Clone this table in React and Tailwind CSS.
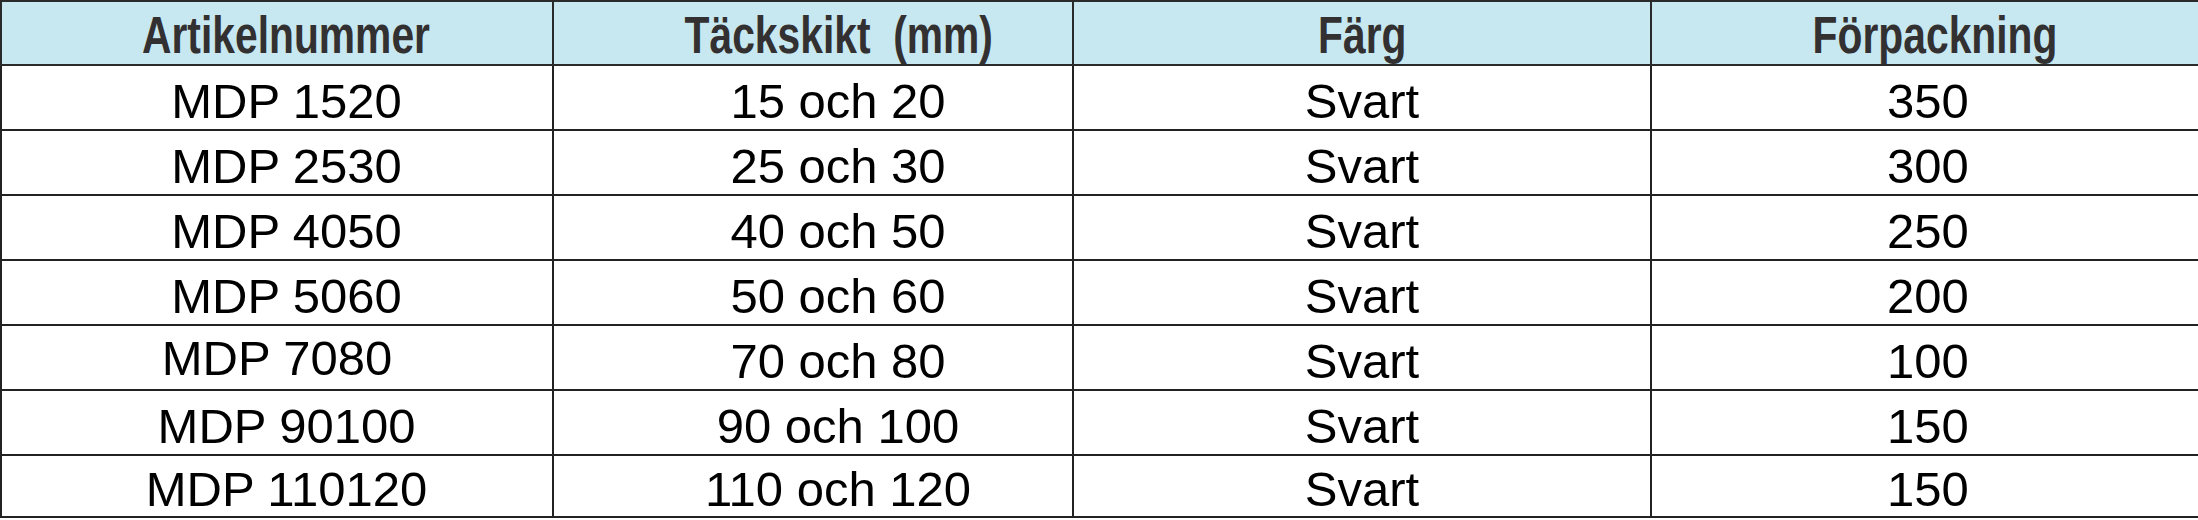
import React from 'react';

const rows = [
  { code: 'MDP 1520', cover: '15 och 20', color: 'Svart', pack: '350' },
  { code: 'MDP 2530', cover: '25 och 30', color: 'Svart', pack: '300' },
  { code: 'MDP 4050', cover: '40 och 50', color: 'Svart', pack: '250' },
  { code: 'MDP 5060', cover: '50 och 60', color: 'Svart', pack: '200' },
  { code: 'MDP 7080', cover: '70 och 80', color: 'Svart', pack: '100', shift: true },
  { code: 'MDP 90100', cover: '90 och 100', color: 'Svart', pack: '150' },
  { code: 'MDP 110120', cover: '110 och 120', color: 'Svart', pack: '150', last: true },
];

const Head = ({ children, className = '' }) => (
  <th className={`h-[64px] border-2 border-[#2a2a2a] bg-[#c7e8f0] p-0 pt-[4px] text-center align-middle font-bold ${className}`}>
    <span className="inline-block scale-x-[0.8] whitespace-pre text-[51px] leading-none text-[#333031]">
      {children}
    </span>
  </th>
);

const Cell = ({ children, className = '' }) => (
  <td className={`border-2 border-[#222] p-0 pt-[7px] text-center align-middle text-[49px] leading-none text-black ${className}`}>
    {children}
  </td>
);

export default function App() {
  return (
    <div className="h-[520px] w-[2198px] overflow-hidden bg-white font-['Liberation_Sans',Arial,sans-serif]">
      <table className="w-[2198px] table-fixed border-collapse">
        <colgroup>
          <col className="w-[552px]" />
          <col className="w-[520px]" />
          <col className="w-[578px]" />
          <col className="w-[548px]" />
        </colgroup>
        <thead>
          <tr>
            <Head className="pl-[17px]">Artikelnummer</Head>
            <Head className="pl-[51px]">Täckskikt  (mm)</Head>
            <Head>Färg</Head>
            <Head className="pl-[20px]">Förpackning</Head>
          </tr>
        </thead>
        <tbody>
          {rows.map((r) => (
            <tr key={r.code} className={r.last ? 'h-[62px]' : 'h-[65px]'}>
              <Cell className={r.shift ? 'pl-0 pb-[6px]' : 'pl-[19px]'}>{r.code}</Cell>
              <Cell className="pl-[50px]">{r.cover}</Cell>
              <Cell>{r.color}</Cell>
              <Cell className="pl-[6px]">{r.pack}</Cell>
            </tr>
          ))}
        </tbody>
      </table>
    </div>
  );
}
